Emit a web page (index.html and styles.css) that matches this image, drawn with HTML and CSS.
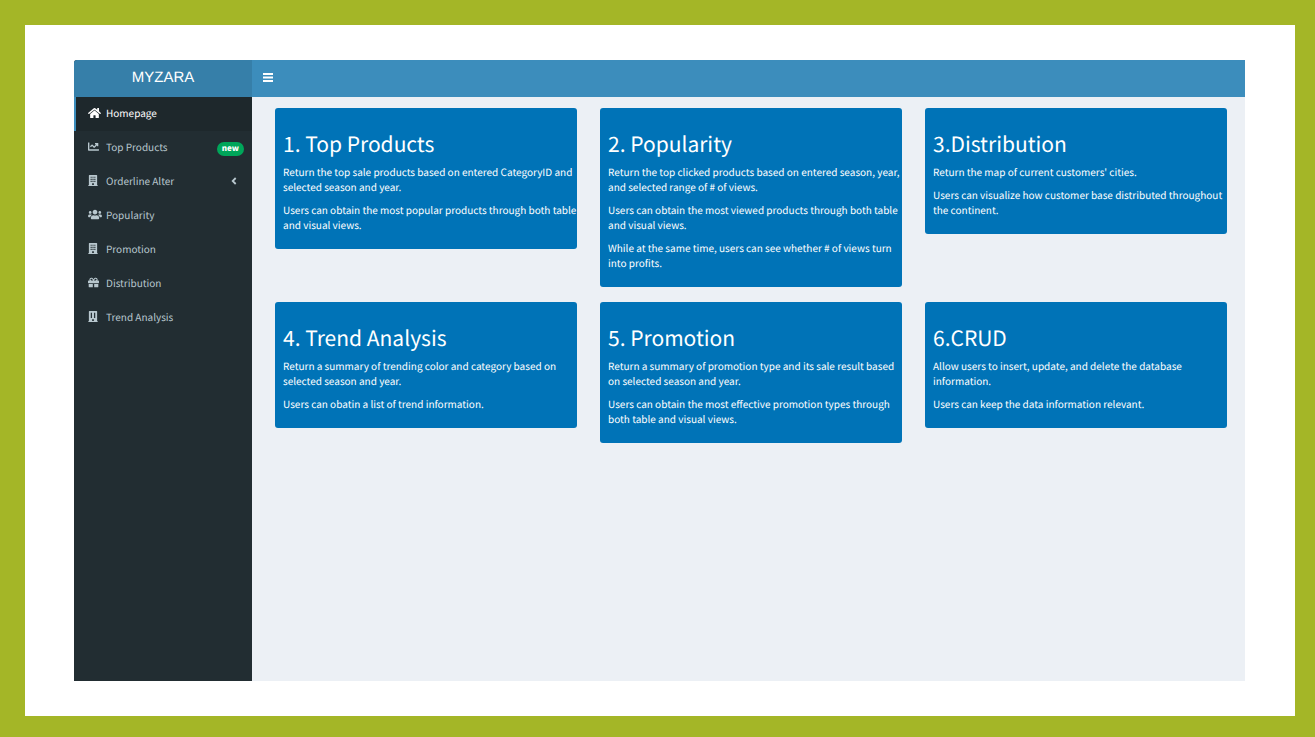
FILE: index.html
```html
<!DOCTYPE html>
<html lang="en">
<head>
<meta charset="utf-8">
<title>MYZARA</title>
<link rel="stylesheet" href="styles.css">
</head>
<body>
<svg class="sprite" aria-hidden="true">
  <symbol id="building" viewBox="0 0 448 512"><path fill-rule="evenodd" d="M436 480h-20V24c0-13-11-24-24-24H56C43 0 32 11 32 24v456H12c-7 0-12 5-12 12v20h448v-20c0-7-5-12-12-12zM112 76h52v56h-52zM198 76h52v56h-52zM284 76h52v56h-52zM112 172h52v56h-52zM198 172h52v56h-52zM284 172h52v56h-52zM112 268h52v56h-52zM198 268h52v56h-52zM284 268h52v56h-52zM184 384h80v80h-80z"/></symbol>
  <symbol id="building-tall" viewBox="0 0 448 512"><path fill-rule="evenodd" d="M436 480h-20V24c0-13-11-24-24-24H56C43 0 32 11 32 24v456H12c-7 0-12 5-12 12v20h448v-20c0-7-5-12-12-12zM120 76h56v250h-56zM272 76h56v250h-56zM184 384h80v80h-80z"/></symbol>
</svg>
<div class="frame">
  <div class="app">
    <aside class="sidebar">
      <a class="brand" href="#">MYZARA</a>
      <nav class="menu">
        <a class="item active" href="#"><svg class="icon wide" viewBox="0 0 576 512"><path d="M280.37 148.26L96 300.11V464a16 16 0 0 0 16 16l112.06-.29a16 16 0 0 0 15.92-16V368a16 16 0 0 1 16-16h64a16 16 0 0 1 16 16v95.64a16 16 0 0 0 16 16.05L464 480a16 16 0 0 0 16-16V300L295.67 148.26a12.19 12.19 0 0 0-15.3 0zM571.6 251.47L488 182.56V44.05a12 12 0 0 0-12-12h-56a12 12 0 0 0-12 12v72.61L318.47 43a48 48 0 0 0-61 0L4.34 251.47a12 12 0 0 0-1.6 16.9l25.5 31A12 12 0 0 0 45.15 301l235.22-193.74a12.19 12.19 0 0 1 15.3 0L530.9 301a12 12 0 0 0 16.9-1.6l25.5-31a12 12 0 0 0-1.7-16.93z"/></svg><span>Homepage</span></a>
        <a class="item" href="#"><svg class="icon" viewBox="0 0 512 512"><path d="M496 384H64V80c0-8.84-7.16-16-16-16H16C7.16 64 0 71.16 0 80v336c0 17.67 14.33 32 32 32h464c8.84 0 16-7.16 16-16v-32c0-8.84-7.16-16-16-16zM464 96H345.94c-21.38 0-32.09 25.85-16.97 40.97l32.4 32.4L288 242.75l-73.37-73.37c-12.5-12.5-32.76-12.5-45.25 0l-68.69 68.69c-6.25 6.25-6.25 16.38 0 22.63l22.62 22.62c6.25 6.25 16.38 6.25 22.63 0L192 237.25l73.37 73.37c12.5 12.5 32.76 12.5 45.25 0l96-96 32.4 32.4c15.12 15.12 40.97 4.41 40.97-16.97V112c.01-8.84-7.15-16-15.99-16z"/></svg><span>Top Products</span><span class="badge">new</span></a>
        <a class="item" href="#"><svg class="icon narrow"><use href="#building"/></svg><span>Orderline Alter</span><svg class="caret" viewBox="0 0 6 8"><path d="M4.7 1L1.7 4l3 3" fill="none" stroke="currentColor" stroke-width="1.8"/></svg></a>
        <a class="item" href="#"><svg class="icon wider" viewBox="0 0 640 512"><path d="M96 224c35.3 0 64-28.7 64-64s-28.7-64-64-64-64 28.7-64 64 28.7 64 64 64zm448 0c35.3 0 64-28.7 64-64s-28.7-64-64-64-64 28.7-64 64 28.7 64 64 64zm32 32h-64c-17.6 0-33.5 7.1-45.1 18.6 40.3 22.1 68.9 62 75.1 109.4h66c17.7 0 32-14.3 32-32v-32c0-35.3-28.7-64-64-64zm-256 0c61.9 0 112-50.1 112-112S381.9 32 320 32 208 82.1 208 144s50.1 112 112 112zm76.8 32h-8.3c-20.8 10-43.9 16-68.5 16s-47.6-6-68.5-16h-8.3C179.6 288 128 339.6 128 403.2V432c0 26.5 21.5 48 48 48h288c26.5 0 48-21.5 48-48v-28.8c0-63.6-51.6-115.2-115.2-115.2zm-223.7-13.4C161.5 263.1 145.6 256 128 256H64c-35.3 0-64 28.7-64 64v32c0 17.7 14.3 32 32 32h65.9c6.3-47.4 34.9-87.3 75.2-109.4z"/></svg><span>Popularity</span></a>
        <a class="item" href="#"><svg class="icon narrow"><use href="#building"/></svg><span>Promotion</span></a>
        <a class="item" href="#"><svg class="icon" viewBox="0 0 512 512"><path d="M32 448c0 17.7 14.3 32 32 32h160V320H32v128zm256 32h160c17.7 0 32-14.3 32-32V320H288v160zm192-320h-42.1c6.2-12.1 10.1-25.5 10.1-40 0-48.5-39.5-88-88-88-41.6 0-68.5 21.3-103 68.3-34.5-47-61.4-68.3-103-68.3-48.5 0-88 39.5-88 88 0 14.5 3.8 27.9 10.1 40H32c-17.7 0-32 14.3-32 32v80c0 8.8 7.2 16 16 16h480c8.8 0 16-7.2 16-16v-80c0-17.7-14.3-32-32-32zm-326.1 0c-22.1 0-40-17.9-40-40s17.9-40 40-40c19.9 0 34.6 3.3 86.1 80h-86.1zm206.1 0h-86.1c51.4-76.5 65.7-80 86.1-80 22.1 0 40 17.9 40 40s-17.9 40-40 40z"/></svg><span>Distribution</span></a>
        <a class="item" href="#"><svg class="icon narrow"><use href="#building-tall"/></svg><span>Trend Analysis</span></a>
      </nav>
    </aside>
    <div class="main">
      <header class="topbar">
        <button class="toggle" type="button" aria-label="Toggle navigation"><svg class="bars" viewBox="0 0 10 9"><path d="M0 0h10v2H0zM0 3.5h10v2H0zM0 7h10v2H0z"/></svg></button>
      </header>
      <main class="cards">
        <section class="card">
          <h2>1. Top Products</h2>
          <p>Return the top sale products based on entered CategoryID and selected season and year.</p>
          <p>Users can obtain the most popular products through both table and visual views.</p>
        </section>
        <section class="card">
          <h2>2. Popularity</h2>
          <p>Return the top clicked products based on entered season, year, and selected range of # of views.</p>
          <p>Users can obtain the most viewed products through both table and visual views.</p>
          <p>While at the same time, users can see whether # of views turn into profits.</p>
        </section>
        <section class="card">
          <h2>3.Distribution</h2>
          <p>Return the map of current customers' cities.</p>
          <p>Users can visualize how customer base distributed throughout the continent.</p>
        </section>
        <section class="card">
          <h2>4. Trend Analysis</h2>
          <p>Return a summary of trending color and category based on selected season and year.</p>
          <p>Users can obatin a list of trend information.</p>
        </section>
        <section class="card">
          <h2>5. Promotion</h2>
          <p>Return a summary of promotion type and its sale result based on selected season and year.</p>
          <p>Users can obtain the most effective promotion types through both table and visual views.</p>
        </section>
        <section class="card">
          <h2>6.CRUD</h2>
          <p>Allow users to insert, update, and delete the database information.</p>
          <p>Users can keep the data information relevant.</p>
        </section>
      </main>
    </div>
  </div>
</div>
</body>
</html>
```
FILE: styles.css
```css
* { box-sizing: border-box; }

body {
  margin: 0;
  min-height: 100vh;
  display: flex;
  padding: 25px 20px 21px 25px;
  background: #a4b627;
  font-family: "Source Sans Pro", "Noto Sans CJK SC", sans-serif;
  font-size: 10px;
  line-height: 15px;
  text-rendering: geometricPrecision;
}

a { color: inherit; text-decoration: none; }
h2, p { margin: 0; }

.sprite { display: none; }

.frame {
  flex: 1;
  display: flex;
  padding: 35px 50px 35px 49px;
  background: #fff;
}

.app {
  flex: 1;
  display: flex;
  overflow: hidden;
  border-top-left-radius: 3px;
  background: #ecf0f5;
}

.sidebar {
  flex: none;
  width: 178px;
  background: #222d32;
  color: #b8c7ce;
}

.brand {
  display: block;
  height: 37px;
  background: #367fa9;
  color: #fff;
  font-family: "Liberation Sans", Arial, sans-serif;
  font-size: 15px;
  line-height: 35px;
  text-align: center;
}

.item {
  display: flex;
  align-items: center;
  height: 34px;
  padding: 0 8px 3px 12px;
  border-left: 2px solid transparent;
}

.item.active {
  border-left-color: #3c8dbc;
  background: #1e282c;
  color: #fff;
}

.icon {
  flex: none;
  width: 11px;
  height: 11px;
  margin-right: 7px;
  fill: currentColor;
}

.icon.narrow { width: 10px; margin-right: 8px; }
.icon.wide { width: 13px; height: 12px; margin-right: 5px; }
.icon.wider { width: 14px; margin-right: 4px; }

.badge {
  margin: 4px 0 0 auto;
  padding: 0 5px;
  border-radius: 8px;
  background: #00a65a;
  color: #fff;
  font-weight: 900;
  font-size: 8px;
  line-height: 14px;
}

.caret {
  width: 6px;
  height: 8px;
  margin: 0 7px 0 auto;
}

.main { flex: 1; }

.topbar {
  display: flex;
  align-items: center;
  height: 37px;
  padding: 0 11px 2px;
  background: #3c8dbc;
}

.toggle {
  display: flex;
  padding: 0;
  border: 0;
  background: none;
  color: #fff;
}

.bars { width: 10px; height: 9px; fill: currentColor; }

.cards {
  display: grid;
  grid-template-columns: repeat(3, 1fr);
  align-items: start;
  gap: 15px 23px;
  padding: 11px 18px 15px 23px;
}

.card {
  padding: 22px 0 7px 8px;
  border-radius: 3px;
  background: #0073b7;
  color: #fff;
}

.card h2 {
  margin-bottom: 6px;
  font-size: 21px;
  font-weight: 400;
  line-height: 28px;
}

.card p { margin-bottom: 8px; }
.card p:last-child { margin-bottom: 10px; }
```
